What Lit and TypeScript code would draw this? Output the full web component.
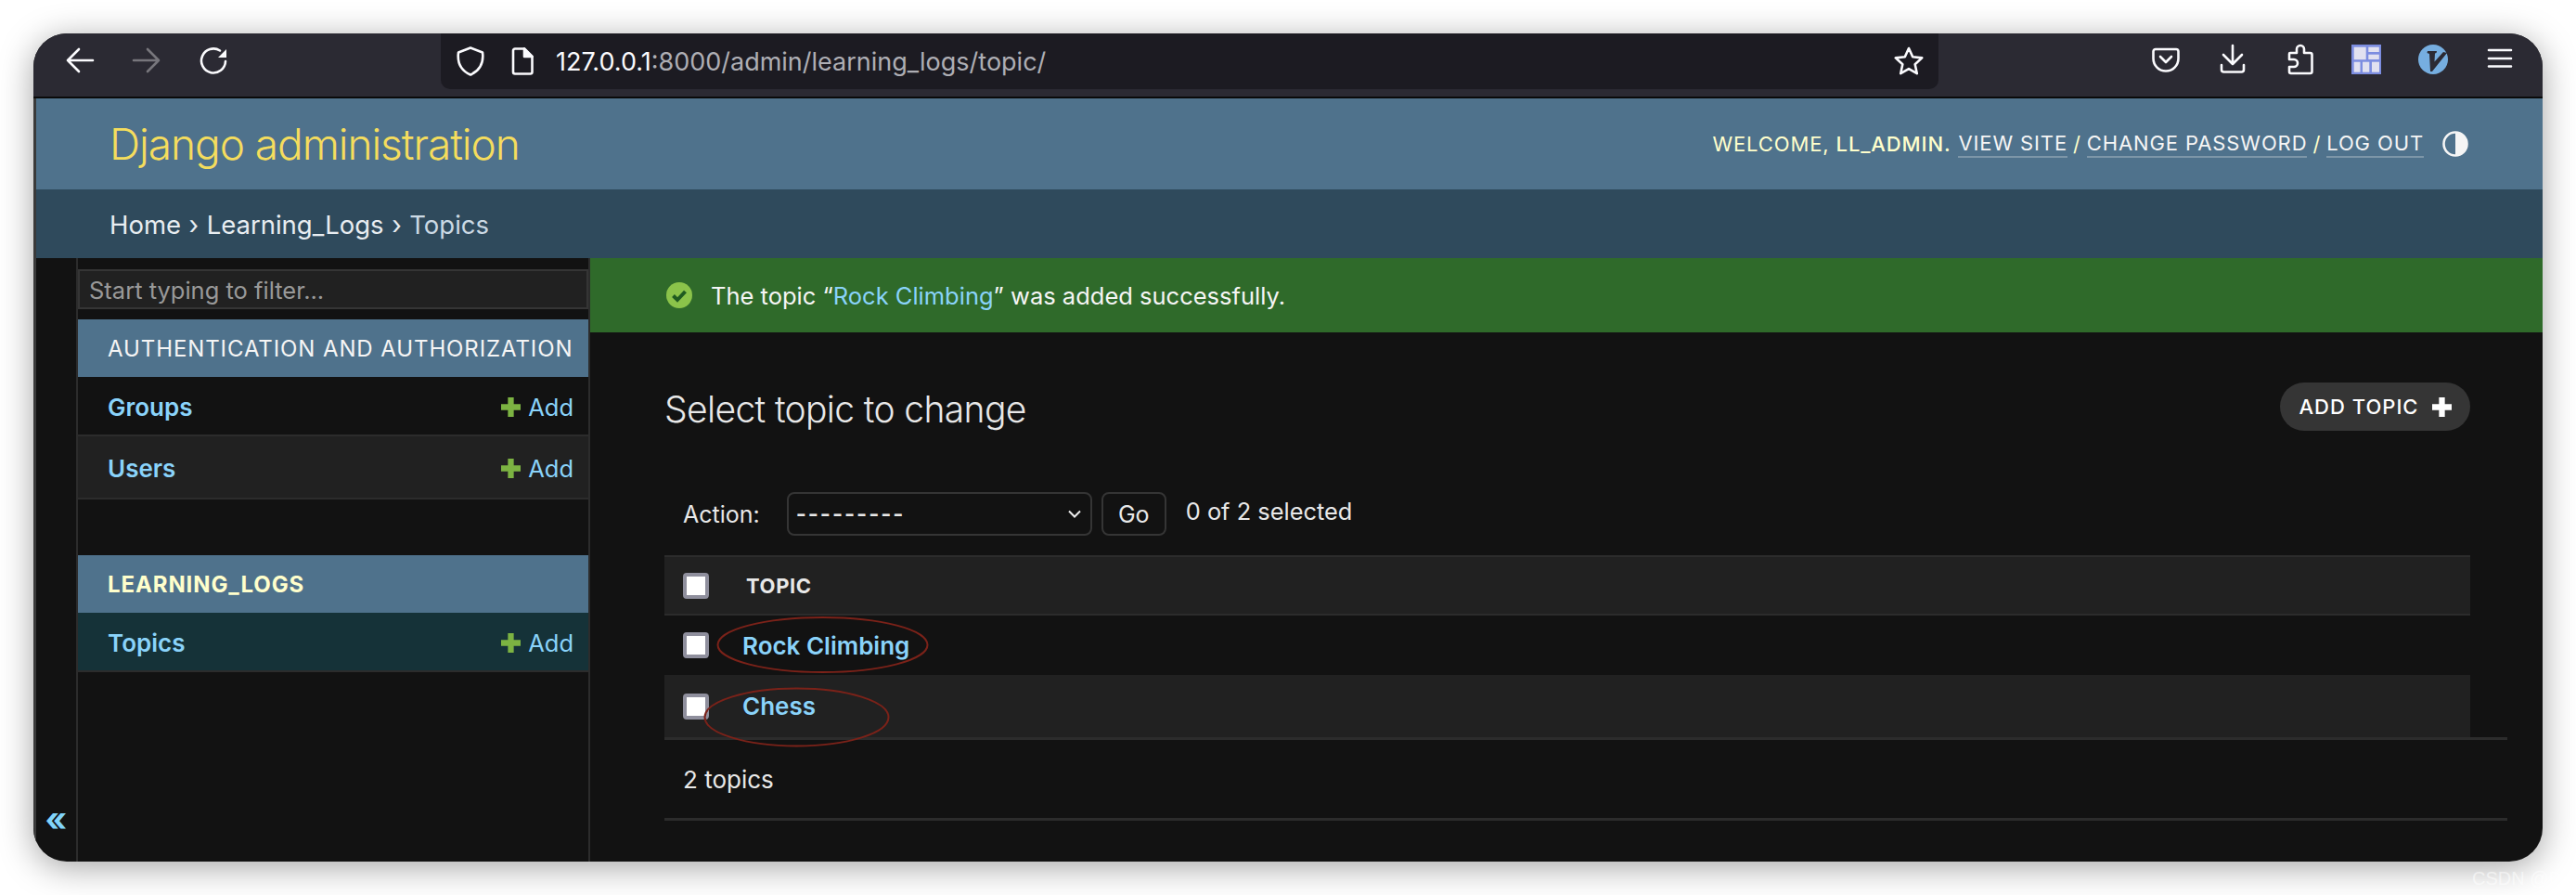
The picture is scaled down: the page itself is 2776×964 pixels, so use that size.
import { LitElement, html, css, svg } from "lit";
import { customElement } from "lit/decorators.js";

const plus = (c: string) => svg`<path d="M10 0v20M0 10h20" stroke="${c}" stroke-width="6" fill="none"/>`;

@customElement("app-root")
export class AppRoot extends LitElement {
  static styles = css`
    :host { display: block; width: 2776px; height: 964px; box-sizing: border-box; padding: 36px; background: #fff; position: relative; overflow: hidden; font-family: Inter, "Liberation Sans", sans-serif; color: #eee; }
    * { box-sizing: border-box; }
    .window { width: 2704px; height: 892px; border-radius: 36px; overflow: hidden; background: #121212; box-shadow: 0 6px 36px rgba(0,0,0,.36); display: flex; flex-direction: column; }
    .toolbar { height: 70px; flex: none; background: #2b2a33; border-bottom: 2px solid #0a0a0a; display: flex; padding: 0 30px 0 34px; }
    .nav { display: flex; gap: 40px; height: 36px; margin-top: 12px; }
    .nav svg, .right svg { width: 32px; height: 36px; display: block; fill: none; stroke: #fbfbfe; stroke-width: 2.6; stroke-linecap: round; stroke-linejoin: round; overflow: visible; }
    .url { margin-left: 229px; width: 1614px; height: 60px; background: #1c1b22; border-radius: 0 0 10px 10px; display: flex; align-items: center; padding: 0 16px 0 17px; }
    .url svg { display: block; fill: none; stroke: #fbfbfe; stroke-width: 2.6; stroke-linejoin: round; flex: none; }
    .shield { width: 30px; height: 32px; }
    .doc { width: 24px; height: 30px; margin-left: 29px; }
    .star { width: 32px; height: 32px; margin-left: auto; }
    .addr { margin-left: 24px; font-size: 27px; color: #aeaeb4; white-space: nowrap; }
    .addr b { font-weight: 400; color: #fbfbfe; }
    .right { margin-left: auto; display: flex; gap: 40px; height: 36px; margin-top: 12px; }
    .body { flex: 1; min-height: 0; display: flex; flex-direction: column; border-left: 3px solid #3a3a3a; }
    .header { height: 98px; flex: none; background: #4f728c; display: flex; align-items: center; justify-content: space-between; padding: 0 80px 0 79px; }
    .brand { font-size: 46px; font-weight: 300; color: #f5dd5d; letter-spacing: -1.05px; }
    .tools { display: flex; align-items: center; font-size: 22px; letter-spacing: .88px; color: #ffc; white-space: nowrap; }
    .tools a { color: #f5f5f5; border-bottom: 2px solid #7d96a8; padding-bottom: 1px; }
    .tools .sep { margin: 0 6px; }
    .tools .wel { margin-right: 8px; }
    .tools strong { font-weight: 500; }
    .tools svg { width: 28px; height: 28px; margin-left: 20px; display: block; }
    .crumbs { height: 74px; flex: none; background: #2f4a5c; display: flex; align-items: center; padding: 2px 0 0 79px; font-size: 27.5px; color: #e8edf1; }
    .crumbs i { font-style: normal; margin: 0 8.500px; }
    .crumbs span { color: #cbd9e4; }
    .content { flex: 1; min-height: 0; display: flex; }
    .toggle { width: 45px; flex: none; border-right: 2px solid #2c2c2c; display: flex; align-items: flex-end; justify-content: center; padding-bottom: 28px; color: #81d4fa; font-size: 36px; line-height: 1; font-weight: 700; }
    .side { width: 552px; flex: none; border-right: 2px solid #2c2c2c; padding-top: 12px; display: flex; flex-direction: column; }
    .filter { height: 43px; background: #212121; border: 2px solid #353535; color: #999; font-size: 25.5px; display: flex; align-items: center; padding: 2px 0 0 10px; margin-bottom: 11px; }
    .sec { height: 62px; background: #4f728c; display: flex; align-items: center; padding-left: 32px; font-size: 24px; letter-spacing: .9px; color: #f5f5f5; white-space: nowrap; }
    .sec.hl { color: #ffc; font-weight: 700; }
    .row { height: 64px; display: flex; align-items: center; justify-content: space-between; padding: 2px 16px 0 32px; border-bottom: 2px solid #2c2c2c; font-size: 26px; }
    .row.tall { height: 68px; }
    .row.alt { background: #212121; }
    .row.cur { background: #153238; }
    .row a { color: #8ad3fa; font-weight: 600; }
    .add { display: flex; align-items: center; gap: 8px; color: #8ad3fa; font-size: 25.5px; }
    .add svg { width: 21px; height: 21px; display: block; }
    .gap { height: 60px; flex: none; }
    .main { flex: 1; min-width: 0; display: flex; flex-direction: column; }
    .msg { height: 80px; flex: none; background: #2f6a2a; display: flex; align-items: center; padding-left: 82px; font-size: 25.5px; color: #f5f5f5; gap: 20px; }
    .msg a { color: #8ad3fa; }
    .msg svg { width: 28px; height: 28px; display: block; }
    .wrap { flex: 1; padding: 54px 38px 0 80px; display: flex; flex-direction: column; }
    .title { display: flex; align-items: center; justify-content: space-between; height: 52px; margin-right: 40px; }
    h1 { margin: 0; padding-top: 4px; font-size: 39px; font-weight: 300; letter-spacing: -.64px; color: #e8e8e8; }
    .btn { width: 205px; height: 52px; border-radius: 26px; background: #353535; display: flex; align-items: center; justify-content: center; gap: 14px; font-size: 22px; letter-spacing: 1px; color: #fff; font-weight: 500; }
    .btn svg { width: 21px; height: 21px; display: block; }
    .actions { display: flex; align-items: center; margin-top: 66px; height: 47px; padding-left: 20px; font-size: 25px; color: #e8e8e8; }
    .sel { width: 329px; height: 47px; margin-left: 29px; border: 2px solid #353535; border-radius: 8px; display: flex; align-items: center; justify-content: space-between; padding: 0 10px 0 8px; font-size: 24px; font-weight: 600; letter-spacing: 1.9px; }
    .sel svg { width: 14px; height: 10px; display: block; }
    .go { width: 70px; height: 47px; margin-left: 10px; border: 2px solid #353535; border-radius: 8px; display: flex; align-items: center; justify-content: center; }
    .count { margin-left: 21px; position: relative; top: -3px; font-size: 25.4px; }
    .table { position: relative; margin-top: 21px; margin-right: 40px; }
    .tr { display: flex; align-items: center; padding-left: 20px; font-size: 26px; }
    .tr.h { height: 65px; background: #212121; border-top: 2px solid #2c2c2c; border-bottom: 2px solid #2c2c2c; font-size: 22px; font-weight: 700; letter-spacing: .6px; color: #e8e8e8; }
    .tr.a { height: 64px; }
    .tr.b { height: 67px; background: #212121; }
    .tr a { color: #8ad3fa; font-weight: 600; margin-left: 36px; }
    .tr .th { margin-left: 40px; }
    .cb { width: 28px; height: 28px; flex: none; background: #fff; border: 4px solid #8f8f9d; border-radius: 4px; }
    .marks { position: absolute; left: 0; top: 0; width: 100%; height: 100%; pointer-events: none; overflow: visible; }
    .marks ellipse { fill: none; stroke: #7b2219; stroke-width: 2; }
    .foot { height: 90px; border-top: 3px solid #2c2c2c; border-bottom: 3px solid #2c2c2c; display: flex; align-items: center; padding-left: 20px; font-size: 26px; color: #e8e8e8; }
    .wm { position: absolute; left: 2664px; top: 935px; font-family: "Liberation Sans", sans-serif; font-size: 20px; color: rgba(255,255,255,.55); white-space: nowrap; }
  `;

  render() {
    const addLink = html`<span class="add"><svg viewBox="0 0 20 20">${plus("#7cb342")}</svg>Add</span>`;
    return html`
      <div class="window">
        <div class="toolbar">
          <div class="nav">
            <svg viewBox="0 0 32 36"><path d="M30 17H3M15 5 3 17l12 12"/></svg>
            <svg viewBox="0 0 32 36" style="stroke:#77767c"><path d="M2 17h27M17 5l12 12-12 12"/></svg>
            <svg viewBox="0 0 32 36"><path d="M23 6.500A13 13 0 1 0 29 18"/><path d="M30 5v9h-9z" fill="#fbfbfe" stroke="none"/></svg>
          </div>
          <div class="url">
            <svg class="shield" viewBox="0 0 30 32"><path d="M15 1.500 28 6.500C29.500 18 25 26 15 30.500 5 26 .5 18 2 6.500Z"/></svg>
            <svg class="doc" viewBox="0 0 24 30"><path d="M4 1.500h10L22.500 10v16.500a2 2 0 0 1-2 2H4a2 2 0 0 1-2-2v-23a2 2 0 0 1 2-2z"/><path d="M14 1.500V10h8.500z" fill="#fbfbfe"/></svg>
            <span class="addr"><b>127.0.0.1</b>:8000/admin/learning_logs/topic/</span>
            <svg class="star" viewBox="0 0 32 32"><path d="M16 2l4.200 9.300 10 1.100-7.500 6.800 2.100 10L16 24.100 7.200 29.200l2.100-10-7.500-6.800 10-1.100z"/></svg>
          </div>
          <div class="right">
            <svg viewBox="0 0 32 36"><path d="M5 5h22a2.500 2.500 0 0 1 2.500 2.500V15a13.500 13.500 0 0 1-27 0V7.500A2.500 2.500 0 0 1 5 5z"/><path d="M10 13l6 6 6-6"/></svg>
            <svg viewBox="0 0 32 36"><path d="M16 1v20M6 11l10 10 10-10M4 22v5a2.500 2.500 0 0 0 2.500 2.500h19A2.500 2.500 0 0 0 28 27v-5"/></svg>
            <svg viewBox="0 0 32 36"><path d="M6 9h7V5a4 4 0 0 1 8 0v4h6.500A2 2 0 0 1 29.500 11v18a2 2 0 0 1-2 2H7a2 2 0 0 1-2-2v-5h5a4 4 0 0 0 0-8H5v-6a1 1 0 0 1 1-1z"/></svg>
            <svg viewBox="0 0 32 36" style="stroke:none"><rect width="32" height="32" fill="#7c8de0"/><g fill="#e1e1f0"><rect x="2.700" y="2.700" width="13" height="13.500"/><rect x="18.300" y="2.700" width="11.500" height="5.300"/><rect x="18.300" y="10.700" width="11.500" height="5.300"/><rect x="2.700" y="18.700" width="6.800" height="11"/><rect x="12" y="18.700" width="7.300" height="11"/><rect x="22" y="18.700" width="8" height="11"/></g></svg>
            <svg viewBox="0 0 32 36" style="stroke:none"><circle cx="16" cy="16" r="16" fill="#76aee0"/><path d="M10 7h10l-.5 2-1.500.5-.5 9L27 8l4 1L15 29h-2L12 10 9.500 9z" fill="#2b2a33"/></svg>
            <svg viewBox="0 0 32 36"><path d="M4 6h24M4 15h24M4 23.500h24"/></svg>
          </div>
        </div>
        <div class="body">
          <div class="header">
            <div class="brand">Django administration</div>
            <div class="tools">
              <span class="wel">WELCOME, <strong>LL_ADMIN.</strong></span>
              <a>VIEW SITE</a><span class="sep">/</span><a>CHANGE PASSWORD</a><span class="sep">/</span><a>LOG OUT</a>
              <svg viewBox="0 0 28 28"><circle cx="14" cy="14" r="12.500" fill="none" stroke="#f5f5f5" stroke-width="2.600"/><path d="M14 1.500a12.500 12.500 0 0 1 0 25z" fill="#f5f5f5"/></svg>
            </div>
          </div>
          <div class="crumbs">Home<i>›</i>Learning_Logs<i>›</i><span>Topics</span></div>
          <div class="content">
            <div class="toggle">«</div>
            <div class="side">
              <div class="filter">Start typing to filter...</div>
              <div class="sec">AUTHENTICATION AND AUTHORIZATION</div>
              <div class="row"><a>Groups</a>${addLink}</div>
              <div class="row tall alt"><a>Users</a>${addLink}</div>
              <div class="gap"></div>
              <div class="sec hl">LEARNING_LOGS</div>
              <div class="row cur"><a>Topics</a>${addLink}</div>
            </div>
            <div class="main">
              <div class="msg">
                <svg viewBox="0 0 28 28"><circle cx="14" cy="14" r="14" fill="#8bc34a"/><path d="M7.500 14.500l4.500 4.500 8.500-9" fill="none" stroke="#1f5a20" stroke-width="4"/></svg>
                <span>The topic “<a>Rock Climbing</a>” was added successfully.</span>
              </div>
              <div class="wrap">
                <div class="title">
                  <h1>Select topic to change</h1>
                  <div class="btn">ADD TOPIC<svg viewBox="0 0 20 20">${plus("#fff")}</svg></div>
                </div>
                <div class="actions">
                  <span>Action:</span>
                  <div class="sel"><span>---------</span><svg viewBox="0 0 14 10"><path d="M1 1.500l6 6 6-6" fill="none" stroke="#eee" stroke-width="2"/></svg></div>
                  <div class="go">Go</div>
                  <span class="count">0 of 2 selected</span>
                </div>
                <div class="table">
                  <div class="tr h"><span class="cb"></span><span class="th">TOPIC</span></div>
                  <div class="tr a"><span class="cb"></span><a>Rock Climbing</a></div>
                  <div class="tr b"><span class="cb"></span><a>Chess</a></div>
                  <svg class="marks"><ellipse cx="170.500" cy="96.500" rx="113" ry="29.500"/><ellipse cx="142.500" cy="174.500" rx="99" ry="31"/></svg>
                </div>
                <div class="foot">2 topics</div>
              </div>
            </div>
          </div>
        </div>
      </div>
      <div class="wm">CSDN @DB</div>
    `;
  }
}
